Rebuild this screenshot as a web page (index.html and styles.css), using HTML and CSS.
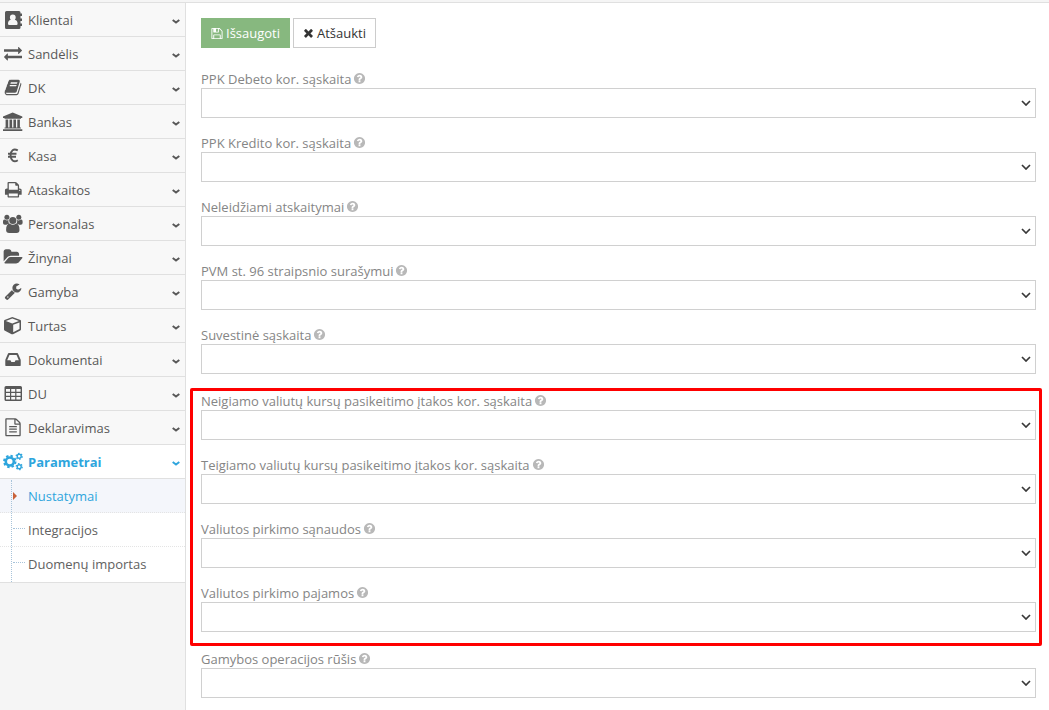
FILE: index.html
```
<!DOCTYPE html>
<html lang="lt">
<head>
  <meta charset="UTF-8">
  <meta name="viewport" content="width=device-width, initial-scale=1.0">
  <title>Nustatymai</title>
  <link rel="stylesheet" href="styles.css">
</head>
<body>
  <svg class="sprite" aria-hidden="true">
    <symbol id="i-angle" viewBox="0 0 8 5"><path d="M.7 .9L4 3.5L7.3 .9" fill="none" stroke="currentColor" stroke-width="1.9"/></symbol>
    <symbol id="i-help" viewBox="0 0 1792 1792"><path d="M1024 1376v-192q0-14-9-23t-23-9h-192q-14 0-23 9t-9 23v192q0 14 9 23t23 9h192q14 0 23-9t9-23zm256-672q0-88-55.5-163t-138.5-116-170-41q-243 0-371 213-15 24 8 42l132 100q7 6 19 6 16 0 25-12 53-68 86-92 34-24 86-24 48 0 85.5 26t37.5 59q0 38-20 61t-68 45q-63 28-115.5 86.5t-52.5 125.5v36q0 14 9 23t23 9h192q14 0 23-9t9-23q0-19 21.5-49.5t54.5-49.5q32-18 49-28.5t46-35 44.5-48 28-60.5 12.5-81zm384 192q0 209-103 385.5t-279.5 279.5-385.5 103-385.5-103-279.5-279.5-103-385.5 103-385.5 279.5-279.5 385.5-103 385.5 103 279.5 279.5 103 385.5z"/></symbol>
  </svg>

  <div class="navbar"></div>
  <div class="main-container">
    <nav class="sidebar">
      <ul class="nav-list">
        <li>
          <a href="#">
            <svg class="menu-icon" viewBox="0 0 20 20"><path fill-rule="evenodd" d="M3.500 1h12.500a1.500 1.500 0 0 1 1.500 1.500v15A1.500 1.500 0 0 1 16 19H3.500a1.500 1.500 0 0 1-1.500-1.500v-15A1.500 1.500 0 0 1 3.500 1zM6.900 7.500a2.900 3 0 0 0 .9 2.300C6 10.200 5 11.500 5 13.700q0 1.300 1.200 1.300h7.200q1.200 0 1.200-1.300c0-2.200-1-3.500-2.800-3.900a2.900 3 0 0 0 .9-2.300a2.900 3 0 0 0-5.800 0zM17.500 3.500H19v2.500h-1.500zM17.500 8.500H19v2.500h-1.500zM17.500 13.500H19v2.500h-1.500z"/></svg>
            <span>Klientai</span>
            <svg class="arrow"><use href="#i-angle"/></svg>
          </a>
        </li>
        <li>
          <a href="#">
            <svg class="menu-icon" viewBox="-100 -10 1991 1991"><path d="M1792 1184v192q0 13-9.500 22.500t-22.500 9.500h-1376v192q0 13-9.500 22.500t-22.500 9.500q-12 0-24-10l-319-320q-9-9-9-22 0-14 9-23l320-320q9-9 23-9 13 0 22.500 9.500t9.500 22.500v192h1376q13 0 22.500 9.500t9.500 22.500zm0-544q0 14-9 23l-320 320q-9 9-23 9-13 0-22.500-9.500t-9.500-22.500v-192h-1376q-13 0-22.500-9.500t-9.500-22.500v-192q0-13 9.500-22.500t22.500-9.500h1376v-192q0-14 9-23t23-9q12 0 24 10l319 319q9 9 9 23z"/></svg>
            <span>Sandėlis</span>
            <svg class="arrow"><use href="#i-angle"/></svg>
          </a>
        </li>
        <li>
          <a href="#">
            <svg class="menu-icon" viewBox="-100 -50 1991 1991"><path d="M1703 478q40 57 18 129l-275 906q-19 64-76.500 107.500t-122.500 43.500h-923q-77 0-148.500-53.500t-99.500-131.500q-24-67-2-127 0-4 3-27t4-37q1-8-3-21.500t-3-19.500q2-11 8-21t16.500-23.500 16.500-23.500q23-38 45-91.500t30-91.500q3-10 .5-30t-.5-28q3-11 17-28t17-23q21-36 42-92t25-90q1-9-2.500-32t.5-28q4-13 22-30.500t22-22.500q19-26 42.500-84.500t27.500-96.500q1-8-3-25.500t-2-26.500q2-8 9-18t18-23 17-21q8-12 16.500-30.500t15-35 16-36 19.500-32 26.500-23.500 36-11.500 47.500 5.500l-1 3q38-9 51-9h761q74 0 114 56t18 130l-274 906q-36 119-71.500 153.500t-128.500 34.500h-869q-27 0-38 15-11 16-1 43 24 70 144 70h923q29 0 56-15.500t35-41.500l300-987q7-22 5-57 38 15 59 43zm-1064 2q-4 13 2 22.500t20 9.500h608q13 0 25.500-9.500t16.500-22.500l21-64q4-13-2-22.500t-20-9.500h-608q-13 0-25.500 9.500t-16.500 22.500zm-83 256q-4 13 2 22.500t20 9.500h608q13 0 25.500-9.500t16.500-22.500l21-64q4-13-2-22.500t-20-9.500h-608q-13 0-25.500 9.500t-16.500 22.500z"/></svg>
            <span>DK</span>
            <svg class="arrow"><use href="#i-angle"/></svg>
          </a>
        </li>
        <li>
          <a href="#">
            <svg class="menu-icon" viewBox="0 0 20 20"><path d="M9.700 0.500L19.300 4.500V6H18v.8H1.500V6H0V4.500zM2.600 7.500h2.600V15.500h1.300V7.500h2.600V15.500h1.300V7.500H13V15.500h1.300V7.500h2.600V15.500h1V16.500H1.500V15.500h1.100zM0 17.300h19.300V19H0z"/></svg>
            <span>Bankas</span>
            <svg class="arrow"><use href="#i-angle"/></svg>
          </a>
        </li>
        <li>
          <a href="#">
            <svg class="menu-icon" viewBox="0 0 20 20"><path d="M14.800 4.400C10.500 2 7.600 4.600 7.600 9.200s3 7.700 7.200 5M5 7.800h8.500M5 10.800h8" fill="none" stroke="currentColor" stroke-width="1.900"/></svg>
            <span>Kasa</span>
            <svg class="arrow"><use href="#i-angle"/></svg>
          </a>
        </li>
        <li>
          <a href="#">
            <svg class="menu-icon" viewBox="-130 -70 1991 1991"><path d="M448 1536h896v-256h-896v256zm0-640h896v-384h-160q-40 0-68-28t-28-68v-160h-640v640zm1152 64q0-26-19-45t-45-19-45 19-19 45 19 45 45 19 45-19 19-45zm128 0v416q0 13-9.500 22.500t-22.500 9.500h-224v160q0 40-28 68t-68 28h-960q-40 0-68-28t-28-68v-160h-224q-13 0-22.500-9.500t-9.500-22.500v-416q0-79 56.500-135.500t135.500-56.500h64v-544q0-40 28-68t68-28h672q40 0 88 20t76 48l152 152q28 28 48 76t20 88v256h64q79 0 135.500 56.500t56.500 135.500z"/></svg>
            <span>Ataskaitos</span>
            <svg class="arrow"><use href="#i-angle"/></svg>
          </a>
        </li>
        <li>
          <a href="#">
            <svg class="menu-icon" viewBox="0 0 20 20"><circle cx="3.900" cy="3.300" r="2.500"/><circle cx="15.800" cy="3.300" r="2.500"/><path d="M0 9V7.500Q0 5.500 1.500 5.600Q3.700 7 5.500 6Q5 8.200 6.200 9.700Q4.500 9.700 3.500 10.800H1.800Q0 10.800 0 9zM19.600 9V7.500Q19.600 5.500 18.100 5.600Q15.900 7 14.100 6Q14.600 8.200 13.400 9.700Q15.100 9.700 16.100 10.800H17.800Q19.600 10.800 19.600 9z"/><circle cx="9.800" cy="6.500" r="3.600"/><path d="M6.500 9.500Q9.800 12 13.100 9.500Q16.500 10 16.500 16Q16.500 19 13.500 19H6.100Q3.100 19 3.100 16Q3.100 10 6.500 9.500z"/></svg>
            <span>Personalas</span>
            <svg class="arrow"><use href="#i-angle"/></svg>
          </a>
        </li>
        <li>
          <a href="#">
            <svg class="menu-icon" viewBox="0 0 1991 1991"><path d="M1943 952q0 31-31 66l-336 396q-43 51-120.500 86.500t-143.500 35.500h-1088q-34 0-60.500-13t-26.500-43q0-31 31-66l336-396q43-51 120.500-86.500t143.500-35.500h1088q34 0 60.500 13t26.500 43zm-343-344v160h-832q-94 0-197 47.500t-164 119.500l-337 396-5 6q0-4-.5-12.500t-.5-12.500v-960q0-92 66-158t158-66h320q92 0 158 66t66 158v32h544q92 0 158 66t66 158z"/></svg>
            <span>Žinynai</span>
            <svg class="arrow"><use href="#i-angle"/></svg>
          </a>
        </li>
        <li>
          <a href="#">
            <svg class="menu-icon" viewBox="-100 -20 1991 1991"><path d="M448 1472q0-26-19-45t-45-19-45 19-19 45 19 45 45 19 45-19 19-45zm644-420l-682 682q-37 37-90 37-52 0-91-37l-106-108q-38-36-38-90 0-53 38-91l681-681q39 98 114.500 173.500t173.500 114.500zm634-435q0 39-23 106-47 134-164.500 217.500t-258.500 83.500q-185 0-316.500-131.500t-131.500-316.500 131.500-316.500 316.500-131.500q58 0 121.500 16.500t107.500 46.500q16 11 16 28t-16 28l-293 169v224l193 107q5-3 79-48.500t135.500-81 70.500-35.500q15 0 23.500 10t8.500 25z"/></svg>
            <span>Gamyba</span>
            <svg class="arrow"><use href="#i-angle"/></svg>
          </a>
        </li>
        <li>
          <a href="#">
            <svg class="menu-icon" viewBox="0 0 20 20"><path fill-rule="evenodd" d="M9.300 1L17.500 3.900Q18 4.200 18 5V13.300Q18 14.200 17.300 14.600L10 18.200Q9.300 18.500 8.600 18.200L1.500 14.600Q1 14.200 1 13.300V5Q1 4.200 1.500 3.900zM9.300 2.600L2.800 5L9.300 7.400L15.900 5zM10.200 16.300L16.500 13V6.400L10.200 8.700z"/></svg>
            <span>Turtas</span>
            <svg class="arrow"><use href="#i-angle"/></svg>
          </a>
        </li>
        <li>
          <a href="#">
            <svg class="menu-icon" viewBox="-100 -50 1991 1991"><path d="M1151 960h316q-1-3-2.500-8.500t-2.500-7.500l-212-496h-708l-212 496q-1 3-2.500 8.500t-2.500 7.500h316l95 192h320zm513 30v482q0 26-19 45t-45 19h-1408q-26 0-45-19t-19-45v-482q0-62 25-123l238-552q10-25 36.500-42t52.500-17h832q26 0 52.500 17t36.500 42l238 552q25 61 25 123z"/></svg>
            <span>Dokumentai</span>
            <svg class="arrow"><use href="#i-angle"/></svg>
          </a>
        </li>
        <li>
          <a href="#">
            <svg class="menu-icon" viewBox="0 0 20 20"><path fill-rule="evenodd" d="M3 2h14.500q1.500 0 1.500 1.500v12q0 1.500-1.500 1.500H3q-1.500 0-1.500-1.500v-12Q1.500 2 3 2zM3 5v2.800h4V5zM8.200 5v2.800h4V5zM13.400 5v2.800h4.200V5zM3 9v2.800h4V9zM8.200 9v2.800h4V9zM13.400 9v2.800h4.200V9zM3 13v2.600h4V13zM8.200 13v2.600h4V13zM13.400 13v2.600h4.200V13z"/></svg>
            <span>DU</span>
            <svg class="arrow"><use href="#i-angle"/></svg>
          </a>
        </li>
        <li>
          <a href="#">
            <svg class="menu-icon" viewBox="-100 -30 1991 1991"><path d="M1596 380q28 28 48 76t20 88v1152q0 40-28 68t-68 28h-1344q-40 0-68-28t-28-68v-1600q0-40 28-68t68-28h896q40 0 88 20t76 48zm-444-244v376h376q-10-29-22-41l-313-313q-12-12-41-22zm384 1528v-1024h-416q-40 0-68-28t-28-68v-416h-768v1536h1280zm-1024-864q0-14 9-23t23-9h704q14 0 23 9t9 23v64q0 14-9 23t-23 9h-704q-14 0-23-9t-9-23v-64zm736 224q14 0 23 9t9 23v64q0 14-9 23t-23 9h-704q-14 0-23-9t-9-23v-64q0-14 9-23t23-9h704zm0 256q14 0 23 9t9 23v64q0 14-9 23t-23 9h-704q-14 0-23-9t-9-23v-64q0-14 9-23t23-9h704z"/></svg>
            <span>Deklaravimas</span>
            <svg class="arrow"><use href="#i-angle"/></svg>
          </a>
        </li>
        <li class="open">
          <a href="#">
            <svg class="menu-icon" viewBox="0 0 20 20">
              <g fill="none" stroke="currentColor">
                <circle cx="6.800" cy="9.500" r="4" stroke-width="2.600"/>
                <circle cx="6.800" cy="9.500" r="5.700" stroke-width="2" stroke-dasharray="2.400 2.077"/>
                <circle cx="16.200" cy="4.300" r="2" stroke-width="1.400"/>
                <circle cx="16.200" cy="4.300" r="3" stroke-width="1.300" stroke-dasharray="1.500 1.642"/>
                <circle cx="16.200" cy="14.700" r="2" stroke-width="1.400"/>
                <circle cx="16.200" cy="14.700" r="3" stroke-width="1.300" stroke-dasharray="1.500 1.642"/>
              </g>
            </svg>
            <span>Parametrai</span>
            <svg class="arrow"><use href="#i-angle"/></svg>
          </a>
          <ul class="submenu">
            <li class="active"><a href="#">Nustatymai</a></li>
            <li><a href="#">Integracijos</a></li>
            <li><a href="#">Duomenų importas</a></li>
          </ul>
        </li>
      </ul>
    </nav>

    <main class="main-content">
      <form>
        <div class="actions">
          <button type="button" class="btn btn-success">
            <svg viewBox="70 0 1654 1792"><path d="M512 1536h768v-384h-768v384zm896 0h128v-896q0-14-10-38.500t-20-34.500l-281-281q-10-10-34-20t-39-10v416q0 40-28 68t-68 28h-576q-40 0-68-28t-28-68v-416h-128v1280h128v-416q0-40 28-68t68-28h832q40 0 68 28t28 68v416zm-384-928v-320q0-13-9.500-22.500t-22.500-9.500h-192q-13 0-22.500 9.500t-9.500 22.500v320q0 13 9.500 22.500t22.500 9.500h192q13 0 22.500-9.500t9.500-22.500zm640 32v928q0 40-28 68t-68 28h-1344q-40 0-68-28t-28-68v-1344q0-40 28-68t68-28h928q40 0 88 20t76 48l280 280q28 28 48 76t20 88z"/></svg>
            Išsaugoti
          </button>
          <button type="button" class="btn btn-white">
            <svg viewBox="150 80 1500 1792"><path d="M1490 1322q0 40-28 68l-136 136q-28 28-68 28t-68-28l-294-294-294 294q-28 28-68 28t-68-28l-136-136q-28-28-28-68t28-68l294-294-294-294q-28-28-28-68t28-68l136-136q28-28 68-28t68 28l294 294 294-294q28-28 68-28t68 28l136 136q28 28 28 68t-28 68l-294 294 294 294q28 28 28 68z"/></svg>
            Atšaukti
          </button>
        </div>

        <div class="fields">
          <div class="field">
            <label for="ppk-debeto">PPK Debeto kor. sąskaita <svg><use href="#i-help"/></svg></label>
            <select id="ppk-debeto"><option></option></select>
          </div>
          <div class="field">
            <label for="ppk-kredito">PPK Kredito kor. sąskaita <svg><use href="#i-help"/></svg></label>
            <select id="ppk-kredito"><option></option></select>
          </div>
          <div class="field">
            <label for="neleidziami">Neleidžiami atskaitymai <svg><use href="#i-help"/></svg></label>
            <select id="neleidziami"><option></option></select>
          </div>
          <div class="field">
            <label for="pvm96">PVM st. 96 straipsnio surašymui <svg><use href="#i-help"/></svg></label>
            <select id="pvm96"><option></option></select>
          </div>
          <div class="field">
            <label for="suvestine">Suvestinė sąskaita <svg><use href="#i-help"/></svg></label>
            <select id="suvestine"><option></option></select>
          </div>
        </div>

        <!-- currency accounts -->
        <div class="fields highlighted">
          <div class="field">
            <label for="neigiama-itaka">Neigiamo valiutų kursų pasikeitimo įtakos kor. sąskaita <svg><use href="#i-help"/></svg></label>
            <select id="neigiama-itaka"><option></option></select>
          </div>
          <div class="field">
            <label for="teigiama-itaka">Teigiamo valiutų kursų pasikeitimo įtakos kor. sąskaita <svg><use href="#i-help"/></svg></label>
            <select id="teigiama-itaka"><option></option></select>
          </div>
          <div class="field">
            <label for="pirkimo-sanaudos">Valiutos pirkimo sąnaudos <svg><use href="#i-help"/></svg></label>
            <select id="pirkimo-sanaudos"><option></option></select>
          </div>
          <div class="field">
            <label for="pirkimo-pajamos">Valiutos pirkimo pajamos <svg><use href="#i-help"/></svg></label>
            <select id="pirkimo-pajamos"><option></option></select>
          </div>
        </div>

        <div class="fields">
          <div class="field">
            <label for="gamybos-rusis">Gamybos operacijos rūšis <svg><use href="#i-help"/></svg></label>
            <select id="gamybos-rusis"><option></option></select>
          </div>
        </div>
      </form>
    </main>
  </div>
</body>
</html>
```
FILE: styles.css
```
* {
  box-sizing: border-box;
}
body {
  margin: 0;
  display: flex;
  flex-direction: column;
  min-height: 100vh;
  font-family: "Open Sans", sans-serif;
  font-size: 13px;
  line-height: 20px;
  color: #393939;
  background-color: #ffffff;
}
ul {
  list-style: none;
  margin: 0;
  padding: 0;
}
a {
  text-decoration: none;
}
svg {
  fill: currentColor;
}
.sprite {
  display: none;
}
.navbar {
  height: 3px;
  background-color: #f5f5f5;
  border-bottom: 1px solid #e0e0e0;
}
.main-container {
  display: flex;
  flex: 1;
}

/* sidebar */
.sidebar {
  width: 186px;
  flex-shrink: 0;
  background-color: #f5f5f5;
  border-right: 1px solid #e0e0e0;
}
.nav-list > li > a {
  display: flex;
  align-items: center;
  height: 34px;
  padding: 0 5px 0 3px;
  color: #585858;
  background-color: #f8f8f8;
  border-bottom: 1px solid #e0e0e0;
}
.nav-list > li > a span {
  flex: 1;
  padding-top: 1px;
}
.menu-icon {
  width: 20px;
  height: 20px;
  margin-right: 5px;
}
.arrow {
  width: 8px;
  height: 5px;
  margin-top: 4px;
}
.nav-list > .open > a {
  color: #2ea5dd;
  background-color: #ffffff;
  font-weight: 700;
}
.submenu {
  position: relative;
  padding-bottom: 1px;
  background-color: #ffffff;
  border-bottom: 1px solid #e0e0e0;
}
.submenu::before {
  content: "";
  position: absolute;
  z-index: 1;
  top: 1px;
  bottom: 0;
  left: 11px;
  border-left: 1px dotted #a8c4da;
}
.submenu li {
  position: relative;
}
.submenu li::before {
  content: "";
  position: absolute;
  top: 15px;
  left: 13px;
  width: 12px;
  border-top: 1px dotted #a8c4da;
}
.submenu a {
  display: block;
  height: 34px;
  padding: 7px 5px 0 28px;
  color: #616161;
  border-bottom: 1px dotted #e4e4e4;
}
.submenu li:last-child a {
  border-bottom: 0;
}
.submenu .active a {
  color: #2ea5dd;
  background-color: #f4f6fb;
}
.submenu .active::before {
  top: 13px;
  width: 0;
  border: 4px solid transparent;
  border-left-color: #c86139;
  border-right: 0;
}

/* content */
.main-content {
  flex: 1;
  padding: 15px 13px 12px 15px;
}
.actions {
  display: flex;
  gap: 3px;
  margin-bottom: 21px;
}
.btn {
  display: flex;
  align-items: center;
  gap: 3px;
  height: 30px;
  padding: 0 9px;
  border: 1px solid #cccccc;
  font: inherit;
  cursor: pointer;
}
.btn svg {
  width: 12px;
  height: 13px;
}
.btn-success {
  color: #ffffff;
  background-color: #87b87f;
  border-color: #87b87f;
}
.btn-white {
  color: #333333;
  background-color: #ffffff;
}
.btn-white svg {
  width: 11px;
}
.fields {
  display: flex;
  flex-direction: column;
  gap: 15px;
}
.highlighted {
  margin: 14px -6px 3px -11px;
  padding: 0 3px 11px 8px;
  border: 3px solid #ff0000;
  border-radius: 2px;
}
.field label {
  display: flex;
  align-items: center;
  gap: 2px;
  height: 19px;
  color: #858585;
}
.field label svg {
  width: 13px;
  height: 13px;
  color: #b8b8b8;
}
.field select {
  display: block;
  appearance: none;
  width: 100%;
  height: 30px;
  padding: 3px 20px 3px 4px;
  border: 1px solid #d0d0d0;
  border-radius: 0;
  background: #ffffff url("data:image/svg+xml,%3Csvg xmlns='http://www.w3.org/2000/svg' width='10' height='6'%3E%3Cpath d='M1 1l4 4 4-4' fill='none' stroke='%23393939' stroke-width='1.7'/%3E%3C/svg%3E") no-repeat right 4px center;
  color: #393939;
  font: inherit;
}
```
